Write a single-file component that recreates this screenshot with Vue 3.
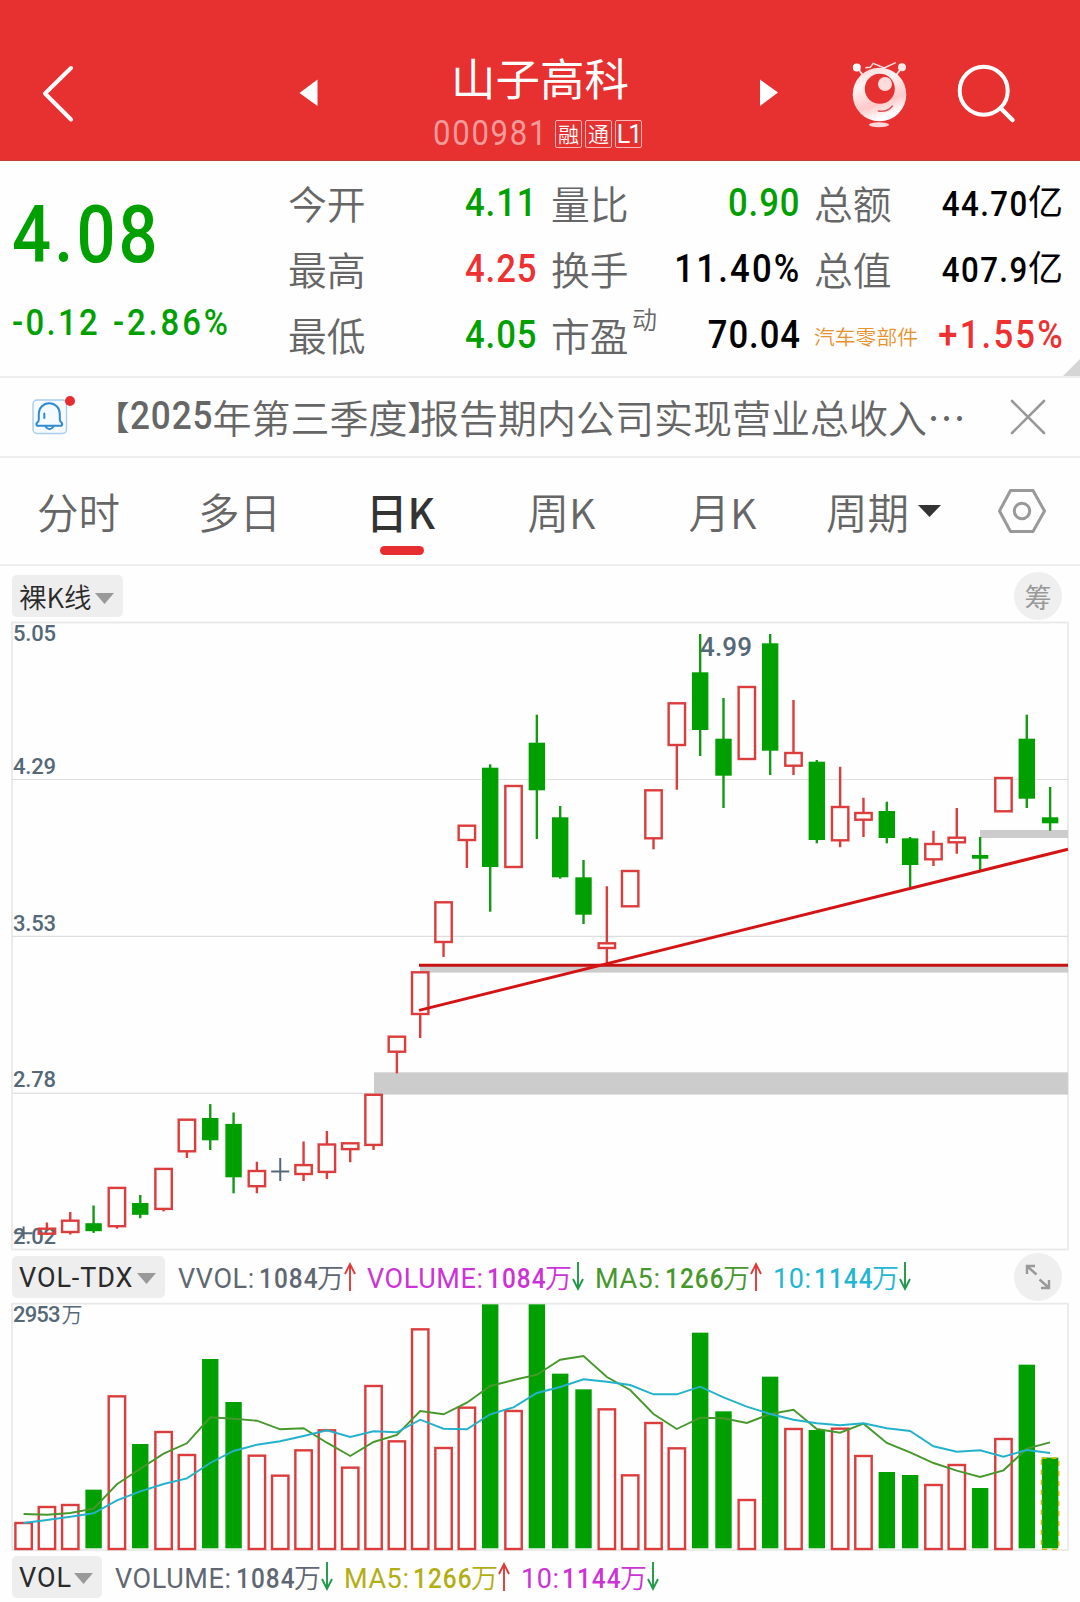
<script setup>
const quotes = [
  [
    { label: '今开', value: '4.11', tone: 'down' },
    { label: '最高', value: '4.25', tone: 'up' },
    { label: '最低', value: '4.05', tone: 'down' },
  ],
  [
    { label: '量比', value: '0.90', tone: 'down' },
    { label: '换手', value: '11.40%', tone: 'flat', wide: true },
    { label: '市盈', sup: '动', value: '70.04', tone: 'flat' },
  ],
  [
    { label: '总额', value: '44.70', unit: '亿', tone: 'flat' },
    { label: '总值', value: '407.9', unit: '亿', tone: 'flat' },
    { label: '汽车零部件', sector: true, value: '+1.55%', tone: 'up', wide: true },
  ],
]

const tabs = ['分时', '多日', '日K', '周K', '月K']
const activeTab = '日K'

const step = 23.33
const cx = (i) => 23.6 + step * i

// [type, body top, body bottom, wick top, wick bottom]; r = rise, g = fall, x = doji
const candles = [
  ['x', 1233.3, 1233.3, 1226.6, 1239], ['r', 1228.7, 1233.7, 1222.4, 1235], ['r', 1220.7, 1232, 1211.9, 1234.6],
  ['g', 1223.2, 1231.2, 1205.5, 1232.9], ['r', 1187.9, 1226.2, 1187.9, 1228.7], ['g', 1203, 1214.8, 1195, 1218.2],
  ['r', 1168.9, 1208.9, 1168.9, 1211.4], ['r', 1119.7, 1151.3, 1119.7, 1158], ['g', 1118, 1140.3, 1104.1, 1150],
  ['g', 1123.9, 1177.3, 1112.5, 1193.3], ['r', 1171, 1186.2, 1161.8, 1193.3], ['x', 1171.4, 1171.4, 1158, 1181.1],
  ['r', 1165.1, 1174, 1141.6, 1181.1], ['r', 1144.5, 1171.9, 1131, 1179], ['r', 1143.3, 1149.1, 1143.3, 1162.2],
  ['r', 1094.8, 1144.9, 1094.8, 1150], ['r', 1036.7, 1051.7, 1036.7, 1073.3], ['r', 972.3, 1014, 972.3, 1038],
  ['r', 902.3, 942, 902.3, 957], ['r', 825.7, 840, 825.7, 868], ['g', 767.7, 867, 764.3, 911.7],
  ['r', 786, 867, 786, 867], ['g', 742.7, 790.3, 714.7, 839], ['g', 817.3, 877.3, 806, 878.7],
  ['g', 877.3, 914.7, 860, 924], ['r', 943.3, 948, 886.3, 963.3], ['r', 871, 906.3, 871, 906.3],
  ['r', 790.3, 838.3, 790.3, 849.3], ['r', 703.3, 745, 703.3, 789.7], ['g', 672.3, 730, 634, 756],
  ['g', 738.7, 775.7, 698, 808], ['r', 687, 759, 687, 759], ['g', 643.3, 750.7, 634, 775],
  ['r', 753, 765.7, 700, 775], ['g', 761.7, 840, 760, 843.3], ['r', 807, 840.3, 766.7, 847.3],
  ['r', 813, 819.7, 797.7, 837], ['g', 811, 838, 801.7, 843.3], ['g', 838.3, 865, 837, 887.3],
  ['r', 844, 859.3, 830.7, 866], ['r', 837.7, 842.3, 808, 853.7], ['g', 855, 858.7, 837, 870],
  ['r', 778, 811.3, 778, 811.3], ['g', 738.7, 798.7, 714.7, 808], ['g', 817.3, 823.3, 787, 830.7],
]
const axis = [['5.05', 640.7], ['4.29', 773.7], ['3.53', 930.7], ['2.78', 1086.9], ['2.02', 1243.8]]
const grid = [779.5, 936.3, 1093.3]

// Heights are thirds of a pixel measured down from the panel origin
const volTop = [
  849, 801, 795, 749, 469, 612, 576, 645, 357, 486, 647, 707, 631, 571, 683, 438, 604, 268, 624, 503, 193, 513, 193,
  401, 448, 508, 706, 549, 625, 278, 514, 780, 410, 567, 570, 566, 648, 696, 705, 735, 675, 744, 597, 374, 653,
]
const ma5 = [
  822, 824, 819, 806, 733, 686, 641, 610, 532, 536, 542, 568, 565, 608, 648, 606, 585, 513, 523, 488, 438, 420, 404,
  359, 348, 411, 450, 522, 567, 533, 535, 549, 522, 509, 567, 578, 551, 609, 637, 669, 692, 711, 691, 626, 607,
]
const ma10 = [
  849, 840, 830, 820, 781, 754, 732, 715, 669, 633, 614, 604, 588, 571, 591, 574, 577, 539, 566, 568, 523, 502, 459,
  441, 418, 425, 435, 463, 463, 440, 472, 500, 522, 539, 550, 556, 550, 565, 573, 619, 635, 631, 650, 630, 639,
]
const vy = (z) => 1240 + z / 3
const line = (arr) => arr.map((z, i) => `${cx(i).toFixed(1)},${vy(z).toFixed(1)}`).join(' ')
const bars = volTop.map((z, i) => ({ x: cx(i), y: vy(z), fall: candles[i][0] === 'g', last: i === 44 }))

const legendTop = [
  { name: 'VVOL:', num: '1084', dir: 'up', color: '#5f6772', w: 81 },
  { name: 'VOLUME:', num: '1084', dir: 'down', color: '#cc33d6', w: 120 },
  { name: 'MA5:', num: '1266', dir: 'up', color: '#46982c', w: 70 },
  { name: '10:', num: '1144', dir: 'down', color: '#22b6d2', w: 41 },
]
const legendBottom = [
  { name: 'VOLUME:', num: '1084', dir: 'down', color: '#5f6772', w: 121 },
  { name: 'MA5:', num: '1266', dir: 'up', color: '#b3ae14', w: 69 },
  { name: '10:', num: '1144', dir: 'down', color: '#cc33d6', w: 41 },
]
</script>

<template>
  <div class="app">
    <header class="top">
      <svg class="ic-back" width="36" height="60" viewBox="0 0 36 60"><path d="M31 6 5 31.500l26 26" fill="none" stroke="#fff" stroke-width="4" stroke-linecap="round" stroke-linejoin="round" /></svg>
      <svg class="ic-prev" width="20" height="30" viewBox="0 0 20 30"><path d="M18.500 1.500v26.500L0.500 15z" fill="#fff" /></svg>
      <div class="title">
        <h1>山子高科</h1>
        <div class="code"><span class="num">000981</span><i>融</i><i>通</i><i class="lv">L1</i></div>
      </div>
      <svg class="ic-next" width="20" height="30" viewBox="0 0 20 30"><path d="M1 1.500v26.500l18-13.500z" fill="#fff" /></svg>
      <svg class="ic-bot" width="60" height="72" viewBox="850 58 60 72">
        <defs>
          <linearGradient id="botBody" x1="0" y1="0" x2="0.35" y2="1">
            <stop offset="0" stop-color="#ffd2d2" /><stop offset=".35" stop-color="#fff3f3" /><stop offset=".75" stop-color="#ffc9c9" /><stop offset="1" stop-color="#fff" />
          </linearGradient>
        </defs>
        <g stroke="#ffe6e6" stroke-width="1.8" fill="none"><path d="M857.5 68l6 8M901.5 68l-6 8" /><path d="M865.4 67.700l4.800-.4 3-4 11 4.600 11.500-5.300" stroke-width="1.400" /></g>
        <circle cx="856.8" cy="67.4" r="4" fill="#fff" /><circle cx="902" cy="67.2" r="4" fill="#ffe9e9" />
        <circle cx="879.5" cy="94.5" r="26.8" fill="url(#botBody)" />
        <circle cx="879.8" cy="88.8" r="15" fill="#e73030" />
        <circle cx="885" cy="84" r="7" fill="#ffdcdc" />
        <path d="M878.3 111q9 1.6 14-5" fill="none" stroke="#e05058" stroke-width="1.5" stroke-linecap="round" />
        <ellipse cx="879" cy="124.7" rx="10" ry="2.5" fill="#ffd9d9" />
      </svg>
      <svg class="ic-search" width="60" height="60" viewBox="956 64 60 60"><circle cx="983.700" cy="90.700" r="24" fill="none" stroke="#fff" stroke-width="4" /><path d="M1001 108.500l11.500 11.500" stroke="#fff" stroke-width="4.500" stroke-linecap="round" /></svg>
    </header>

    <section class="quote">
      <div class="last">
        <div class="price">4.08</div>
        <div class="chg"><span>-0.12</span><span>-2.86%</span></div>
      </div>
      <div v-for="(col, c) in quotes" :key="c" class="col" :class="'col' + c">
        <div v-for="q in col" :key="q.label" class="row">
          <span :class="q.sector ? 'sector' : 'label'">{{ q.label }}<sup v-if="q.sup">{{ q.sup }}</sup></span>
          <span class="val" :class="[q.tone, { big: q.unit, wide: q.wide }]"><b>{{ q.value }}</b><em v-if="q.unit">{{ q.unit }}</em></span>
        </div>
      </div>
      <svg class="corner" width="17" height="17"><path d="M17 0v17H0z" fill="#d5d5d5" /></svg>
    </section>

    <section class="news">
      <svg class="bell" width="44" height="44" viewBox="32 394 44 44">
        <rect x="33" y="400" width="33.500" height="33.500" rx="4" fill="#f6fbff" stroke="#a9cdee" stroke-width="1.400" />
        <path d="M39.500 425.700h-2.500q-1.500-2 .5-3.500q1.300-.7 1.300-3v-5.500a10.500 10.500 0 0 1 21 0v5.500q0 2.300 1.400 3q1.800 1.500.4 3.500zM45.500 426.500q4 5.500 8 0M44.300 413.500v4.500" fill="none" stroke="#2f8bd3" stroke-width="2" stroke-linejoin="round" stroke-linecap="round" />
        <circle cx="70" cy="401" r="5" fill="#e62e30" />
      </svg>
      <p><b class="bl">【</b><b class="yr">2025</b>年第三季度<b class="br">】</b>报告期内公司实现营业总收入…</p>
      <svg class="close" width="36" height="36" viewBox="0 0 36 36"><path d="M2 2l32 32M34 2 2 34" stroke="#999" stroke-width="2.600" stroke-linecap="round" /></svg>
    </section>

    <nav class="tabs">
      <span v-for="t in tabs" :key="t" class="tab" :class="{ on: t === activeTab }">{{ t }}</span>
      <span class="period">周期<svg width="23" height="12"><path d="M0 0h23L11.500 12z" fill="#333" /></svg></span>
      <svg class="gear" width="50" height="46" viewBox="0 0 50 46"><path d="M13.500 2.500h22.500L47.500 23 36 43.500H13.500L2.500 23z" fill="none" stroke="#999" stroke-width="3" stroke-linejoin="round" /><circle cx="25" cy="23" r="7.700" fill="none" stroke="#999" stroke-width="3" /></svg>
    </nav>

    <div class="bar first">
      <span class="pill naked"><span>裸K线</span><svg width="19" height="11"><path d="M0 0h19L9.500 11z" fill="#999" /></svg></span>
      <span class="round">筹</span>
    </div>

    <svg class="kchart" width="1080" height="630" viewBox="0 621 1080 630">
      <rect x="12" y="622.500" width="1056" height="627" fill="none" stroke="#e9e9e9" stroke-width="1.800" />
      <path v-for="g in grid" :key="g" :d="`M12 ${g}H1068`" stroke="#dedede" stroke-width="1.200" />
      <g fill="#ccc"><rect x="980" y="830" width="88" height="8" /><rect x="420" y="965" width="648" height="7.600" /><rect x="374" y="1072.300" width="694" height="22.300" /></g>
      <g class="axis"><text v-for="a in axis" :key="a[0]" x="13" :y="a[1]" textLength="43">{{ a[0] }}</text></g>
      <text class="peak" x="700" y="655.700" textLength="52">4.99</text>
      <template v-for="(k, i) in candles" :key="i">
        <path v-if="k[0] === 'x'" :d="`M${cx(i) - 9} ${k[1]}h18M${cx(i)} ${k[3]}V${k[4]}`" stroke="#546878" stroke-width="2" />
        <g v-else-if="k[0] === 'g'">
          <path :d="`M${cx(i)} ${k[3]}V${k[4]}`" stroke="#139a13" stroke-width="2.400" />
          <rect :x="cx(i) - 8.200" :y="k[1]" width="16.400" :height="k[2] - k[1]" fill="#00a000" />
        </g>
        <g v-else fill="none" stroke="#dc3c3c" stroke-width="2.400">
          <rect :x="cx(i) - 8.200" :y="k[1]" width="16.400" :height="k[2] - k[1]" />
          <path :d="`M${cx(i)} ${k[3]}V${k[1]}M${cx(i)} ${k[2]}V${k[4]}`" />
        </g>
      </template>
      <g stroke="#d41414" stroke-width="3"><path d="M419 965.200H1068" stroke="#c61212" /><path d="M419 1010.400L1068 849.200" /></g>
    </svg>

    <div class="bar">
      <span class="pill lat tdx"><span>VOL-TDX</span><svg width="19" height="11"><path d="M0 0h19L9.500 11z" fill="#999" /></svg></span>
      <span v-for="(l, i) in legendTop" :key="i" class="leg" :style="{ color: l.color }">
        <span class="nm" :style="{ width: l.w + 'px' }">{{ l.name }}</span><span class="nu">{{ l.num }}</span><span class="wan">万</span>
        <svg v-if="l.dir === 'up'" width="12" height="30" viewBox="0 0 12 30"><path d="M6 29V2M1 12 6 2l5 10" fill="none" stroke="#dd3b38" stroke-width="1.900" /></svg>
        <svg v-else width="12" height="30" viewBox="0 0 12 30"><path d="M6 0v27M1 17l5 10 5-10" fill="none" stroke="#1f9a48" stroke-width="1.900" /></svg>
      </span>
      <span class="round"><svg width="26" height="26" viewBox="0 0 26 26"><path d="M2 10V2h8M2.500 2.500l9 8M24 16v8h-8M23.500 23.500l-9-8" fill="none" stroke="#999" stroke-width="2.400" /></svg></span>
    </div>

    <svg class="vchart" width="1080" height="249" viewBox="0 1302 1080 249">
      <rect x="12" y="1303.700" width="1056" height="246.300" fill="none" stroke="#e9e9e9" stroke-width="1.800" />
      <text class="vmax" x="13" y="1322" textLength="47.500">2953</text><text class="vmax cjk" x="61.500" y="1322">万</text>
      <template v-for="(b, i) in bars" :key="i">
        <rect v-if="b.fall" :x="b.x - 8.200" :y="b.y" width="16.400" :height="1548.300 - b.y" fill="#00a000" />
        <rect v-else :x="b.x - 8.200" :y="b.y" width="16.400" :height="1549 - b.y" fill="none" stroke="#dc3c3c" stroke-width="2.400" />
        <rect v-if="b.last" :x="b.x - 8.600" :y="b.y + 0.500" width="17.200" :height="1548.800 - b.y" fill="none" stroke="#c9b800" stroke-width="1.600" stroke-dasharray="5 5" />
      </template>
      <polyline :points="line(ma5)" fill="none" stroke="#46982c" stroke-width="1.900" />
      <polyline :points="line(ma10)" fill="none" stroke="#22b2cc" stroke-width="1.900" />
    </svg>

    <div class="bar">
      <span class="pill lat vol"><span>VOL</span><svg width="19" height="11"><path d="M0 0h19L9.500 11z" fill="#999" /></svg></span>
      <span v-for="(l, i) in legendBottom" :key="i" class="leg" :style="{ color: l.color }">
        <span class="nm" :style="{ width: l.w + 'px' }">{{ l.name }}</span><span class="nu">{{ l.num }}</span><span class="wan">万</span>
        <svg v-if="l.dir === 'up'" width="12" height="30" viewBox="0 0 12 30"><path d="M6 29V2M1 12 6 2l5 10" fill="none" stroke="#dd3b38" stroke-width="1.900" /></svg>
        <svg v-else width="12" height="30" viewBox="0 0 12 30"><path d="M6 0v27M1 17l5 10 5-10" fill="none" stroke="#1f9a48" stroke-width="1.900" /></svg>
      </span>
    </div>
  </div>
</template>

<style>
body { margin: 0; background: #fff; overflow: hidden; }
</style>

<style scoped>
.app { width: 1080px; height: 1602px; overflow: hidden; background: #fefefe; font-family: "Noto Sans CJK SC", sans-serif; font-weight: 350; color: #666; }
svg { display: block; flex: none; overflow: visible; }
.top { height: 161px; box-sizing: border-box; background: #e73030; border-bottom: 1px solid #c43c3c; display: flex; align-items: flex-start; color: #fff; }
.ic-back { margin: 62px 0 0 40px; }
.ic-prev { margin: 78px 0 0 223px; }
.title { width: 224px; margin: 45px 0 0 109px; }
h1 { margin: 0; font-size: 44.500px; font-weight: 400; line-height: 64px; text-align: center; white-space: nowrap; }
.code { display: flex; align-items: center; height: 50px; gap: 3px; }
.code .num { font: 400 35px/50px Roboto, sans-serif; letter-spacing: 1.900px; color: #f39a9a; width: 119px; white-space: nowrap; margin-left: 5px; transform: scaleX(.89); transform-origin: left; flex: none; }
.code i { font-style: normal; box-sizing: border-box; width: 27px; height: 28px; border: 1px solid #f8b5b5; border-radius: 2px; font-size: 21px; line-height: 24px; text-align: center; flex: none; }
.code i.lv { font-family: Roboto, sans-serif; font-size: 25px; font-weight: 400; line-height: 27px; letter-spacing: -2px; }
.ic-next { margin: 78px 0 0 107px; }
.ic-bot { margin: 58px 0 0 71px; }
.ic-search { margin: 64px 0 0 46px; }

.quote { position: relative; height: 215px; display: flex; }
.last { width: 288px; color: #00a000; font-family: Roboto, sans-serif; white-space: nowrap; }
.price { font-size: 79px; font-weight: 500; line-height: 90px; margin: 29px 0 0 12px; letter-spacing: 3.600px; transform: scaleX(.87); transform-origin: left; }
.chg { display: flex; font-size: 36.500px; font-weight: 500; line-height: 50px; margin: 18px 0 0 12px; }
.chg span { letter-spacing: 2.600px; transform: scaleX(.9); transform-origin: left; }
.chg span:first-child { width: 101px; flex: none; }
.chg span:last-child { letter-spacing: 3.200px; }
.col { padding-top: 8.500px; width: 249px; }
.col1 { margin-left: 14px; width: 249px; }
.col2 { margin-left: 14px; }
.row { height: 66px; line-height: 66px; display: flex; justify-content: space-between; white-space: nowrap; }
.label { font-size: 38.800px; line-height: 65px; position: relative; }
sup { position: absolute; left: 81px; top: -17px; font-size: 25px; line-height: 66px; }
.sector { font-size: 20.800px; color: #e8912f; padding-top: 1px; }
.val { font-family: Roboto, "Noto Sans CJK SC", sans-serif; font-size: 39.400px; display: flex; }
.val b { font-weight: 500; letter-spacing: 1.100px; margin-right: -1px; transform: scaleX(.88); transform-origin: right; }
.val.wide b { letter-spacing: 2.500px; margin-right: -2px; }
.val.big { font-size: 35.500px; padding-top: 1px; }
.val.big b { letter-spacing: 1.600px; }
em { font-style: normal; font-weight: 400; font-size: 35px; }
.up { color: #ee3031; }
.down { color: #00a000; }
.flat { color: #000; }
.corner { position: absolute; right: 0; bottom: 0; }

.news { height: 78px; border-top: 2px solid #eee; border-bottom: 2px solid #eee; display: flex; align-items: flex-start; }
.bell { margin: 16px 0 0 32px; }
.news p { margin: 0 0 0 37px; width: 897px; font-size: 39px; line-height: 77px; white-space: nowrap; display: flex; }
.news b { font-weight: 500; }
.bl, .br { font-size: 33px; font-feature-settings: "halt"; flex: none; }
.br { margin-right: -4px; }
.yr { font-family: Roboto, sans-serif; width: 83px; letter-spacing: 1px; flex: none; transform: scaleX(.9); transform-origin: left; }
.close { margin: 21px 0 0; }

.tabs { height: 106px; border-bottom: 2px solid #eee; display: flex; align-items: center; font-size: 41.500px; line-height: 105px; }
.tab { width: 161px; text-align: center; }
.tab:first-child { margin-left: -2px; }
.on { position: relative; color: #333; font-weight: 500; }
.on::after { content: ""; position: absolute; left: 60px; bottom: 9px; width: 44px; height: 9px; border-radius: 5px; background: #e62e30; }
.period { display: flex; align-items: center; gap: 9px; margin-left: 23px; }
.gear { margin-left: 56px; }

.bar { height: 51px; display: flex; align-items: center; padding: 0 18px 0 12px; }
.bar.first { height: 50px; padding-top: 5px; }
.pill { height: 42px; line-height: 44px; box-sizing: border-box; padding: 0 9px 0 7px; background: #eee; border-radius: 5px; color: #2a2a2a; font-size: 27.500px; display: flex; align-items: center; justify-content: space-between; font-family: Roboto, "Noto Sans CJK SC", sans-serif; white-space: nowrap; flex: none; }
.naked { width: 111px; font-weight: 400; }
.naked span { font-family: "Noto Sans CJK SC", sans-serif; font-weight: 350; }
.tdx { width: 153px; }
.vol { width: 90px; }
.pill svg { margin-top: 4px; }
.lat { font-size: 27px; font-weight: 400; letter-spacing: .9px; }
.lat span { padding-top: 2px; }
.round { margin-left: auto; width: 48px; height: 48px; border-radius: 50%; background: #efefef; color: #999; font-size: 27px; line-height: 45px; display: flex; align-items: center; justify-content: center; font-weight: 400; }
.leg { display: flex; align-items: center; font: 400 27px/42px Roboto, sans-serif; margin-left: 11px; padding-top: 1px; }
.pill + .leg { margin-left: 13px; }
.nm, .nu { white-space: nowrap; padding-top: 3px; }
.nm { letter-spacing: .6px; }
.nu { width: 58px; letter-spacing: 1.200px; font-weight: 500; transform: scaleX(.9); transform-origin: left; }
.wan { font-family: "Noto Sans CJK SC", sans-serif; font-size: 27px; font-weight: 350; width: 27px; }
.axis text { font: 500 22px Roboto, sans-serif; fill: #546878; }
.peak { font: 500 26px Roboto, sans-serif; fill: #546878; }
.vmax { font: 500 22px Roboto, sans-serif; fill: #546878; }
.vmax.cjk { font: 350 21px "Noto Sans CJK SC", sans-serif; }
</style>
